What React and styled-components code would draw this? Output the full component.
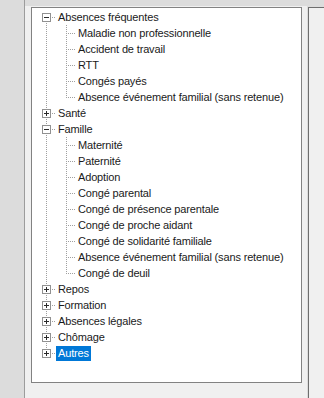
import styled, { createGlobalStyle } from "styled-components";

const GlobalStyle = createGlobalStyle`
  html, body {
    margin: 0;
    padding: 0;
    background: #dcdcdc;
  }
  body {
    font-family: "Liberation Sans", Arial, sans-serif;
    font-size: 11px;
    color: #000;
  }
`;

const tree = [
  {
    label: "Absences fréquentes",
    open: true,
    children: [
      "Maladie non professionnelle",
      "Accident de travail",
      "RTT",
      "Congés payés",
      "Absence événement familial (sans retenue)",
    ],
  },
  { label: "Santé", children: [] },
  {
    label: "Famille",
    open: true,
    children: [
      "Maternité",
      "Paternité",
      "Adoption",
      "Congé parental",
      "Congé de présence parentale",
      "Congé de proche aidant",
      "Congé de solidarité familiale",
      "Absence événement familial (sans retenue)",
      "Congé de deuil",
    ],
  },
  { label: "Repos", children: [] },
  { label: "Formation", children: [] },
  { label: "Absences légales", children: [] },
  { label: "Chômage", children: [] },
  { label: "Autres", children: [], selected: true },
];

// flatten the tree into rows with their guide cells
const rows = [];
tree.forEach((node, i) => {
  const first = i === 0;
  const last = i === tree.length - 1;
  rows.push({
    label: node.label,
    selected: node.selected,
    cells: [{ line: first ? "bottom" : last ? "top" : "full", box: node.open ? "minus" : "plus" }],
  });
  if (node.open) {
    node.children.forEach((child, j) => {
      rows.push({
        label: child,
        cells: [
          { line: last ? "none" : "full" },
          { line: j === node.children.length - 1 ? "top" : "full", branch: true },
        ],
      });
    });
  }
});

const DOTS_V = "repeating-linear-gradient(to bottom, #a0a0a0 0 1px, transparent 1px 2px)";
const DOTS_H = "repeating-linear-gradient(to right, #a0a0a0 0 1px, transparent 1px 2px)";

const guide = ({ $line, $branch, $box }) => {
  const imgs = [];
  const pos = [];
  const size = [];
  if ($line === "full") {
    imgs.push(DOTS_V); pos.push("10px 0"); size.push("1px 16px");
  } else if ($line === "top") {
    imgs.push(DOTS_V); pos.push("10px 0"); size.push("1px 9px");
  } else if ($line === "bottom") {
    imgs.push(DOTS_V); pos.push("10px 8px"); size.push("1px 8px");
  }
  if ($branch || $box) {
    imgs.push(DOTS_H);
    pos.push($box ? "16px 8px" : "12px 8px");
    size.push($box ? "4px 1px" : "8px 1px");
  }
  if (!imgs.length) return "";
  return `
    background-image: ${imgs.join(", ")};
    background-position: ${pos.join(", ")};
    background-size: ${size.join(", ")};
    background-repeat: no-repeat;
  `;
};

const Expander = ({ type }) => (
  <Box width="9" height="9" viewBox="0 0 9 9" shapeRendering="crispEdges">
    <rect x="0.5" y="0.5" width="8" height="8" fill="#fff" stroke="#919191" />
    <line x1="2" y1="4.5" x2="7" y2="4.5" stroke="#2b2b2b" />
    {type === "plus" && <line x1="4.5" y1="2" x2="4.5" y2="7" stroke="#2b2b2b" />}
  </Box>
);

const App = () => {
  return (
    <>
      <GlobalStyle />
      <Page>
        <Sidebar />
        <Pane>
          <TreeBox>
            {rows.map((row, i) => (
              <Row key={i}>
                {row.cells.map((c, k) => (
                  <Gutter key={k} $line={c.line} $branch={c.branch} $box={!!c.box}>
                    {c.box && <Expander type={c.box} />}
                  </Gutter>
                ))}
                <Label $selected={row.selected}>{row.label}</Label>
              </Row>
            ))}
          </TreeBox>
        </Pane>
        <SidePanel />
      </Page>
    </>
  );
};

const Page = styled.div`
  display: flex;
  height: 398px;
  width: 324px;
  overflow: hidden;
`;

const Sidebar = styled.div`
  flex: none;
  width: 24px;
  background: #dcdcdc;
  border-right: 1px solid #9c9c9c;
`;

const Pane = styled.div`
  flex: none;
  width: 282px;
  margin-top: 6px;
  padding: 1px 5px 0 6px;
  box-sizing: border-box;
  background: #f0f0f0;
`;

const TreeBox = styled.div`
  width: 271px;
  height: 376px;
  box-sizing: border-box;
  border: 1px solid #828282;
  background: #fff;
  padding: 1px 0 0 4px;
  overflow: hidden;
`;

const SidePanel = styled.div`
  flex: 1;
  margin-top: 7px;
  margin-left: 1px;
  background: #f0f0f0;
  border-left: 1px solid #6e6e6e;
  border-top: 1px solid #6e6e6e;
`;

const Row = styled.div`
  display: flex;
  align-items: center;
  height: 16px;
  white-space: nowrap;
`;

const Gutter = styled.span`
  flex: none;
  display: block;
  width: 20px;
  height: 16px;
  ${guide}
`;

const Box = styled.svg`
  display: block;
  margin: 4px 0 0 6px;
`;

const Label = styled.span`
  display: block;
  height: 15px;
  line-height: 15px;
  padding: 0 2px;
  letter-spacing: -0.15px;
  background: ${({ $selected }) => ($selected ? "#0078d7" : "transparent")};
  color: ${({ $selected }) => ($selected ? "#fff" : "#1a1a1a")};
`;

export default App;
